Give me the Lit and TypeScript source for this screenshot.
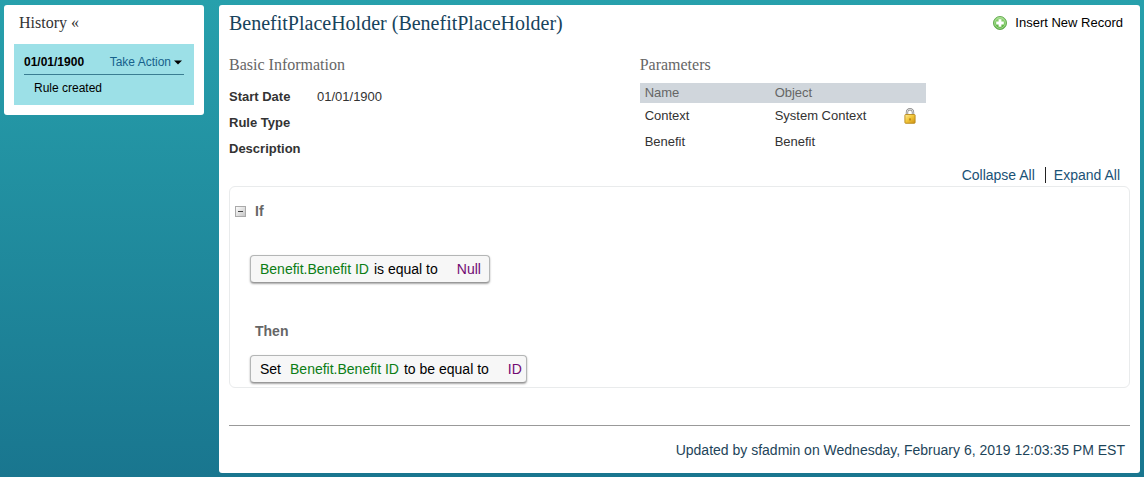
import { LitElement, html, css, svg } from "lit";
import { customElement, state } from "lit/decorators.js";

const plusIcon = html`<svg class="plus" viewBox="0 0 14 14" aria-hidden="true">
  <defs>
    <linearGradient id="pg" x1="0" y1="0" x2="0" y2="1">
      <stop offset="0" stop-color="#a5dc8c" />
      <stop offset="0.5" stop-color="#6fc453" />
      <stop offset="1" stop-color="#55a83c" />
    </linearGradient>
  </defs>
  <circle cx="7" cy="7" r="6.5" fill="url(#pg)" stroke="#5aa446" stroke-width="0.9" />
  <circle cx="7" cy="7" r="5.3" fill="none" stroke="#b5e3a2" stroke-width="0.8" />
  <path d="M5.6 3.2h2.8v2.4h2.4v2.8H8.4v2.4H5.6V8.4H3.2V5.6h2.4z" fill="#fff" />
</svg>`;

const lockIcon = html`<svg class="lock" viewBox="0 0 12 16" role="img" aria-label="Locked">
  <defs>
    <linearGradient id="lg" x1="0" y1="0" x2="1" y2="1">
      <stop offset="0" stop-color="#fdeb9c" />
      <stop offset="0.45" stop-color="#f3c93c" />
      <stop offset="1" stop-color="#cf8f10" />
    </linearGradient>
  </defs>
  <path d="M3 7.5V4.2a3 3 0 0 1 6 0v3.3" fill="none" stroke="#8b8b8b" stroke-width="2.4" />
  <path d="M3 7.5V4.2a3 3 0 0 1 6 0v3.3" fill="none" stroke="#dedede" stroke-width="1" />
  <rect x="0.9" y="6.5" width="10.2" height="8.8" rx="0.8" fill="url(#lg)" stroke="#b98a1c" stroke-width="0.9" />
  <path d="M6 10.2a.8.8 0 0 1 .5 1.4v.9h-1v-.9a.8.8 0 0 1 .5-1.4z" fill="#a06c0c" />
</svg>`;

@customElement("app-root")
export class AppRoot extends LitElement {
  @state() private open = true;

  private parameters = [
    { name: "Context", object: "System Context", locked: true },
    { name: "Benefit", object: "Benefit", locked: false },
  ];

  private fields = [
    { label: "Start Date", value: "01/01/1900" },
    { label: "Rule Type", value: "" },
    { label: "Description", value: "" },
  ];

  static styles = css`
    :host {
      display: flex;
      align-items: flex-start;
      gap: 15px;
      box-sizing: border-box;
      min-height: 100vh;
      padding: 5px 4px 4px;
      background: linear-gradient(#27a0ac, #19768f);
      font: 14px/20px "Liberation Sans", Arial, sans-serif;
      color: #000;
    }
    * { box-sizing: border-box; }
    h1, h2, h3, dl, dd, p { margin: 0; font-weight: normal; }
    button {
      padding: 0;
      border: 0;
      background: none;
      font: inherit;
      color: inherit;
      cursor: pointer;
    }
    .serif { font-family: "Liberation Serif", "Times New Roman", serif; }
    .history {
      flex: 0 0 200px;
      padding: 8px 10px 10px;
      border-radius: 3px;
      background: #fff;
    }
    .history-title {
      display: block;
      padding-left: 5px;
      margin-bottom: 11px;
      font-size: 16px;
      color: #333;
    }
    .entry {
      padding: 8px 10px 7px;
      background: #9ce0e7;
      font-size: 12px;
    }
    .entry-head {
      display: flex;
      justify-content: space-between;
      border-bottom: 1px solid #3a7e92;
      padding-bottom: 2px;
      margin-bottom: 3px;
    }
    .take { display: flex; align-items: center; gap: 3px; padding-right: 2px; color: #16628c; }
    .caret { width: 8px; height: 5px; }
    .entry-text { padding-left: 10px; }
    .main {
      flex: 1;
      min-width: 0;
      padding: 6px 10px 13px;
      border-radius: 3px;
      background: #fff;
    }
    .top { display: flex; justify-content: space-between; align-items: center; }
    .title { font-size: 20px; line-height: 24px; color: #17435c; }
    .insert { display: flex; align-items: center; gap: 8px; padding-right: 7px; font-size: 13px; }
    .plus { width: 14px; height: 14px; }
    .info { display: grid; grid-template-columns: 5fr 6fr; gap: 2px; margin-top: 20px; }
    .section { font-size: 16px; color: #666; margin-bottom: 8px; }
    .fields { padding-top: 1px; font-size: 13px; color: #333; }
    .field { display: flex; line-height: 26px; }
    .field dt { width: 88px; font-weight: bold; }
    table { width: 286px; border-collapse: collapse; font-size: 13px; color: #333; }
    th { padding: 0 5px; background: #d0d6dc; font-weight: normal; text-align: left; color: #666; }
    td { height: 26px; padding: 0 5px; }
    .c-name { width: 130px; }
    .c-lock { width: 27px; }
    .lock { display: block; width: 12px; height: 16px; }
    .tools { display: flex; justify-content: flex-end; padding-right: 10px; margin-top: 3px; }
    .tools button { color: #1a5276; }
    .tools button + button {
      align-self: center;
      margin-left: 10px;
      padding-left: 8px;
      border-left: 1px solid #222;
      line-height: 16px;
    }
    .rule {
      margin-top: 1px;
      padding: 14px 5px 4px;
      border: 1px solid #e9ebec;
      border-radius: 6px;
    }
    .branch { display: flex; align-items: center; gap: 9px; }
    .toggle { display: flex; }
    .box { width: 11px; height: 11px; }
    .word { font-weight: bold; color: #666; font-size: 14px; }
    .then { padding-left: 20px; margin: 38px 0 14px; }
    .chips { padding-left: 15px; }
    .if-chips { margin-top: 34px; }
    .chip {
      display: inline-flex;
      align-items: center;
      height: 28px;
      padding: 0 8px 0 9px;
      border: 1px solid #b4b6b6;
      border-bottom-color: #999;
      border-radius: 4px;
      background: #f7f7f7;
      box-shadow: 0 1px 2px rgba(0, 0, 0, 0.35);
      vertical-align: top;
    }
    .chip.assign { padding-right: 4px; }
    .set { margin-right: 9px; }
    .attr { margin-right: 5px; color: #0b7d14; }
    .val { margin-left: 19px; color: #720a72; }
    .foot {
      margin-top: 37px;
      padding: 14px 5px 0;
      border-top: 1px solid #999;
      text-align: right;
      color: #1d4459;
    }
  `;

  render() {
    return html`
      <aside class="history">
        <button class="history-title serif">History «</button>
        <div class="entry">
          <div class="entry-head">
            <b>01/01/1900</b>
            <button class="take">
              Take Action
              <svg class="caret" viewBox="0 0 8 5"><path d="M0 .5h8L4 4.5z" fill="#000" /></svg>
            </button>
          </div>
          <p class="entry-text">Rule created</p>
        </div>
      </aside>
      <main class="main">
        <header class="top">
          <h1 class="title serif">BenefitPlaceHolder (BenefitPlaceHolder)</h1>
          <button class="insert">${plusIcon}Insert New Record</button>
        </header>
        <div class="info">
          <section>
            <h2 class="section serif">Basic Information</h2>
            <dl class="fields">
              ${this.fields.map((f) => html`<div class="field"><dt>${f.label}</dt><dd>${f.value}</dd></div>`)}
            </dl>
          </section>
          <section>
            <h2 class="section serif">Parameters</h2>
            <table>
              <thead>
                <tr><th class="c-name">Name</th><th>Object</th><th class="c-lock"></th></tr>
              </thead>
              <tbody>
                ${this.parameters.map(
                  (p) => html`<tr><td>${p.name}</td><td>${p.object}</td><td>${p.locked ? lockIcon : ""}</td></tr>`
                )}
              </tbody>
            </table>
          </section>
        </div>
        <div class="tools">
          <button @click=${() => (this.open = false)}>Collapse All</button>
          <button @click=${() => (this.open = true)}>Expand All</button>
        </div>
        <section class="rule">
          <div class="branch">
            <button class="toggle" aria-label="Toggle rule" @click=${() => (this.open = !this.open)}>
              <svg class="box" viewBox="0 0 11 11">
                <defs>
                  <linearGradient id="bg" x1="0" y1="0" x2="1" y2="1">
                    <stop offset="0" stop-color="#fff" /><stop offset="1" stop-color="#c4c4c4" />
                  </linearGradient>
                </defs>
                <rect x=".5" y=".5" width="10" height="10" fill="url(#bg)" stroke="#aaa" />
                <path d="M3 5.5h5" stroke="#444" />
                ${this.open ? "" : svg`<path d="M5.5 3v5" stroke="#444" />`}
              </svg>
            </button>
            <h3 class="word">If</h3>
          </div>
          ${this.open
            ? html`
                <div class="chips if-chips">
                  <div class="chip"><span class="attr">Benefit.Benefit ID</span><span>is equal to</span><span class="val">Null</span></div>
                </div>
                <h3 class="word then">Then</h3>
                <div class="chips">
                  <div class="chip assign"><span class="set">Set</span><span class="attr">Benefit.Benefit ID</span><span>to be equal to</span><span class="val">ID</span></div>
                </div>
              `
            : ""}
        </section>
        <footer class="foot">Updated by sfadmin on Wednesday, February 6, 2019 12:03:35 PM EST</footer>
      </main>
    `;
  }
}
